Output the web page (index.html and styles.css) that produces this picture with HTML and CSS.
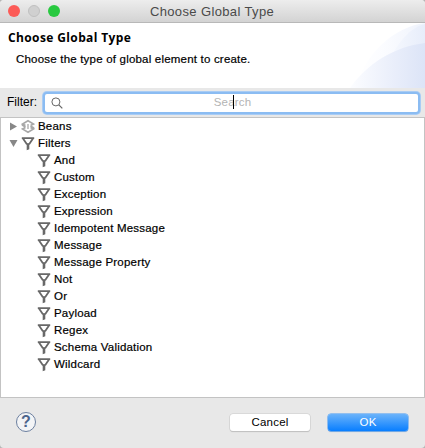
FILE: index.html
```html
<!DOCTYPE html>
<html lang="en">
<head>
<meta charset="utf-8">
<title>Choose Global Type</title>
<link rel="stylesheet" href="styles.css">
</head>
<body>
<svg class="defs" width="0" height="0">
  <symbol id="funnel" viewBox="0 0 14 15"><path d="M.8 2.100h12.400M2 2.500l3.900 5.700M12 2.500 8.100 8.200" fill="none" stroke="#686868" stroke-width="1.800"/><path d="M4.900 7.300h4.200L8.300 9v4.300l-2.600 1V9z" fill="#686868"/></symbol>
</svg>
<div class="window">
  <div class="titlebar">
    <div class="lights"><i class="light red"></i><i class="light gray"></i><i class="light green"></i></div>
    <div class="title">Choose Global Type</div>
  </div>
  <header class="header">
    <svg class="swoosh" width="75" height="65" viewBox="0 0 75 65">
      <defs>
        <linearGradient id="g1"><stop offset="0" stop-color="#fff"/><stop offset=".4" stop-color="#fbfcff"/><stop offset="1" stop-color="#eff3fc"/></linearGradient>
        <linearGradient id="g2"><stop offset="0" stop-color="#f8faff"/><stop offset="1" stop-color="#e7edfa"/></linearGradient>
        <linearGradient id="g3"><stop offset="0" stop-color="#fcfdff"/><stop offset=".5" stop-color="#ecf0fb"/><stop offset="1" stop-color="#dce4f7"/></linearGradient>
      </defs>
      <path d="M6 65C14 32 43 4 75 0v65z" fill="url(#g1)"/>
      <path d="M36 45C43 27 57 5 75 1v64H36z" fill="url(#g2)"/>
      <path d="M0 65C17 41 43 24 75 20v45z" fill="url(#g3)"/>
    </svg>
    <h1 class="heading">Choose Global Type</h1>
    <p class="message">Choose the type of global element to create.</p>
  </header>
  <div class="filter">
    <label class="filter-label">Filter:</label>
    <div class="search">
      <svg class="glass" width="12" height="12" viewBox="0 0 12 12"><circle cx="4.9" cy="4.9" r="4" fill="none" stroke="#666" stroke-width="1"/><path d="m7.8 7.8 3.5 3.5" stroke="#666" stroke-width="1.2"/></svg>
      <span class="placeholder">Search<i class="caret"></i></span>
    </div>
  </div>
  <div class="tree">
    <div class="row"><svg class="arrow" width="9" height="9"><path d="M1 .5 8 4.500 1 8.500z" fill="#878787"/></svg><svg class="icon" width="14" height="15" viewBox="0 0 14 15"><g fill="none" stroke="#a8a8a8" stroke-width="1.600"><path d="M4.500 6.500 1.500 5 7 1.800 12.500 5 9.500 6.500M4.500 8.500 1.500 10 7 13.200 12.500 10 9.500 8.500M1.500 5v1.300L4.500 8M12.500 10V8.700L9.500 7"/><path d="M7 5v5" stroke-width="1.300"/></g></svg><span>Beans</span></div>
    <div class="row"><svg class="arrow" width="9" height="9"><path d="M.5 1h8L4.500 8z" fill="#878787"/></svg><svg class="icon" width="14" height="15"><use href="#funnel"/></svg><span>Filters</span></div>
    <div class="row child"><svg class="icon" width="14" height="15"><use href="#funnel"/></svg><span>And</span></div>
    <div class="row child"><svg class="icon" width="14" height="15"><use href="#funnel"/></svg><span>Custom</span></div>
    <div class="row child"><svg class="icon" width="14" height="15"><use href="#funnel"/></svg><span>Exception</span></div>
    <div class="row child"><svg class="icon" width="14" height="15"><use href="#funnel"/></svg><span>Expression</span></div>
    <div class="row child"><svg class="icon" width="14" height="15"><use href="#funnel"/></svg><span>Idempotent Message</span></div>
    <div class="row child"><svg class="icon" width="14" height="15"><use href="#funnel"/></svg><span>Message</span></div>
    <div class="row child"><svg class="icon" width="14" height="15"><use href="#funnel"/></svg><span>Message Property</span></div>
    <div class="row child"><svg class="icon" width="14" height="15"><use href="#funnel"/></svg><span>Not</span></div>
    <div class="row child"><svg class="icon" width="14" height="15"><use href="#funnel"/></svg><span>Or</span></div>
    <div class="row child"><svg class="icon" width="14" height="15"><use href="#funnel"/></svg><span>Payload</span></div>
    <div class="row child"><svg class="icon" width="14" height="15"><use href="#funnel"/></svg><span>Regex</span></div>
    <div class="row child"><svg class="icon" width="14" height="15"><use href="#funnel"/></svg><span>Schema Validation</span></div>
    <div class="row child"><svg class="icon" width="14" height="15"><use href="#funnel"/></svg><span>Wildcard</span></div>
  </div>
  <footer class="footer">
    <div class="help">?</div>
    <div class="actions"><div class="button">Cancel</div><div class="button primary">OK</div></div>
  </footer>
</div>
</body>
</html>
```
FILE: styles.css
```css
* { box-sizing: border-box; }
body { margin: 0; background: #b5b5b5; overflow: hidden; }
.defs { display: block; }
.window {
  width: 425px; height: 448px; display: flex; flex-direction: column;
  background: #e8e8e8; border-radius: 4px; overflow: hidden;
  font: 11.5px/17px "Liberation Sans", Arial, sans-serif; letter-spacing: 0.2px; color: #000;
}
.titlebar {
  height: 23px; flex: none; display: grid; grid-template-columns: 75px 1fr 76px; align-items: center;
  background: linear-gradient(#ededed, #d3d3d3); border-bottom: 1px solid #b8b8b8;
}
.lights { display: flex; gap: 8px; padding-left: 8px; }
.light { width: 12px; height: 12px; border-radius: 50%; }
.red { background: #fc5b57; }
.gray { background: #d0d0d0; border: 1px solid #c0c0c0; }
.green { background: #28c940; }
.title { padding-top: 1px; font-size: 13px; letter-spacing: 0.37px; color: #4a4a4a; text-align: center; white-space: nowrap; }
.header { position: relative; height: 65px; flex: none; background: #fff; padding: 6px 8px 0; }
.swoosh { position: absolute; right: 0; top: 0; }
.heading { margin: 0; font: bold 12px/17px "Open Sans", sans-serif; letter-spacing: 0.38px; }
.message { margin: 5px 0 0 8px; }
.message, .tree { -webkit-text-stroke: 0.2px #000; }
.filter { height: 29px; flex: none; display: flex; align-items: center; padding: 0 4px 0 7px; }
.filter-label { width: 36px; font-size: 12px; letter-spacing: 0; }
.search {
  position: relative; flex: 1; height: 18px; display: flex; align-items: center; justify-content: center;
  margin: 0 3px 0 2px; background: #fff; border-radius: 2px; box-shadow: 0 0 0 2px #8bbcf2, 0 0 0 3px #a9ccf4;
}
.glass { position: absolute; left: 6px; top: 3px; }
.placeholder { position: relative; left: 1px; color: #b4b4b4; }
.caret { position: absolute; left: 19px; top: 1px; width: 1px; height: 14px; background: #000; }
.tree { height: 281px; flex: none; background: #fff; border: 1px solid #c3c3c3; }
.row { display: flex; align-items: center; height: 17px; padding-left: 8px; }
.arrow { flex: none; margin-right: 3px; }
.icon { flex: none; margin-right: 3px; }
.child { padding-left: 36px; }
.footer { flex: 1; display: flex; align-items: center; justify-content: space-between; padding: 0 17px 2px 16px; }
.help {
  width: 20px; height: 20px; border: 1px solid #6b7f9f; border-radius: 50%; background: #f3f4f6;
  color: #4d658c; font-size: 16px; font-weight: bold; line-height: 18px; text-align: center; letter-spacing: 0;
}
.actions { display: flex; gap: 18px; }
.button {
  width: 80px; height: 17px; border-radius: 3px; background: #fff; text-align: center;
  box-shadow: 0 0 0 0.5px #c9c9c9, 0 1px 1px #b5b5b5;
}
.primary { background: linear-gradient(#6bb3fa, #087eff); color: #fff; box-shadow: 0 0 0 0.5px #3c96f5, 0 1px 1px #a0b5d0; }
```
